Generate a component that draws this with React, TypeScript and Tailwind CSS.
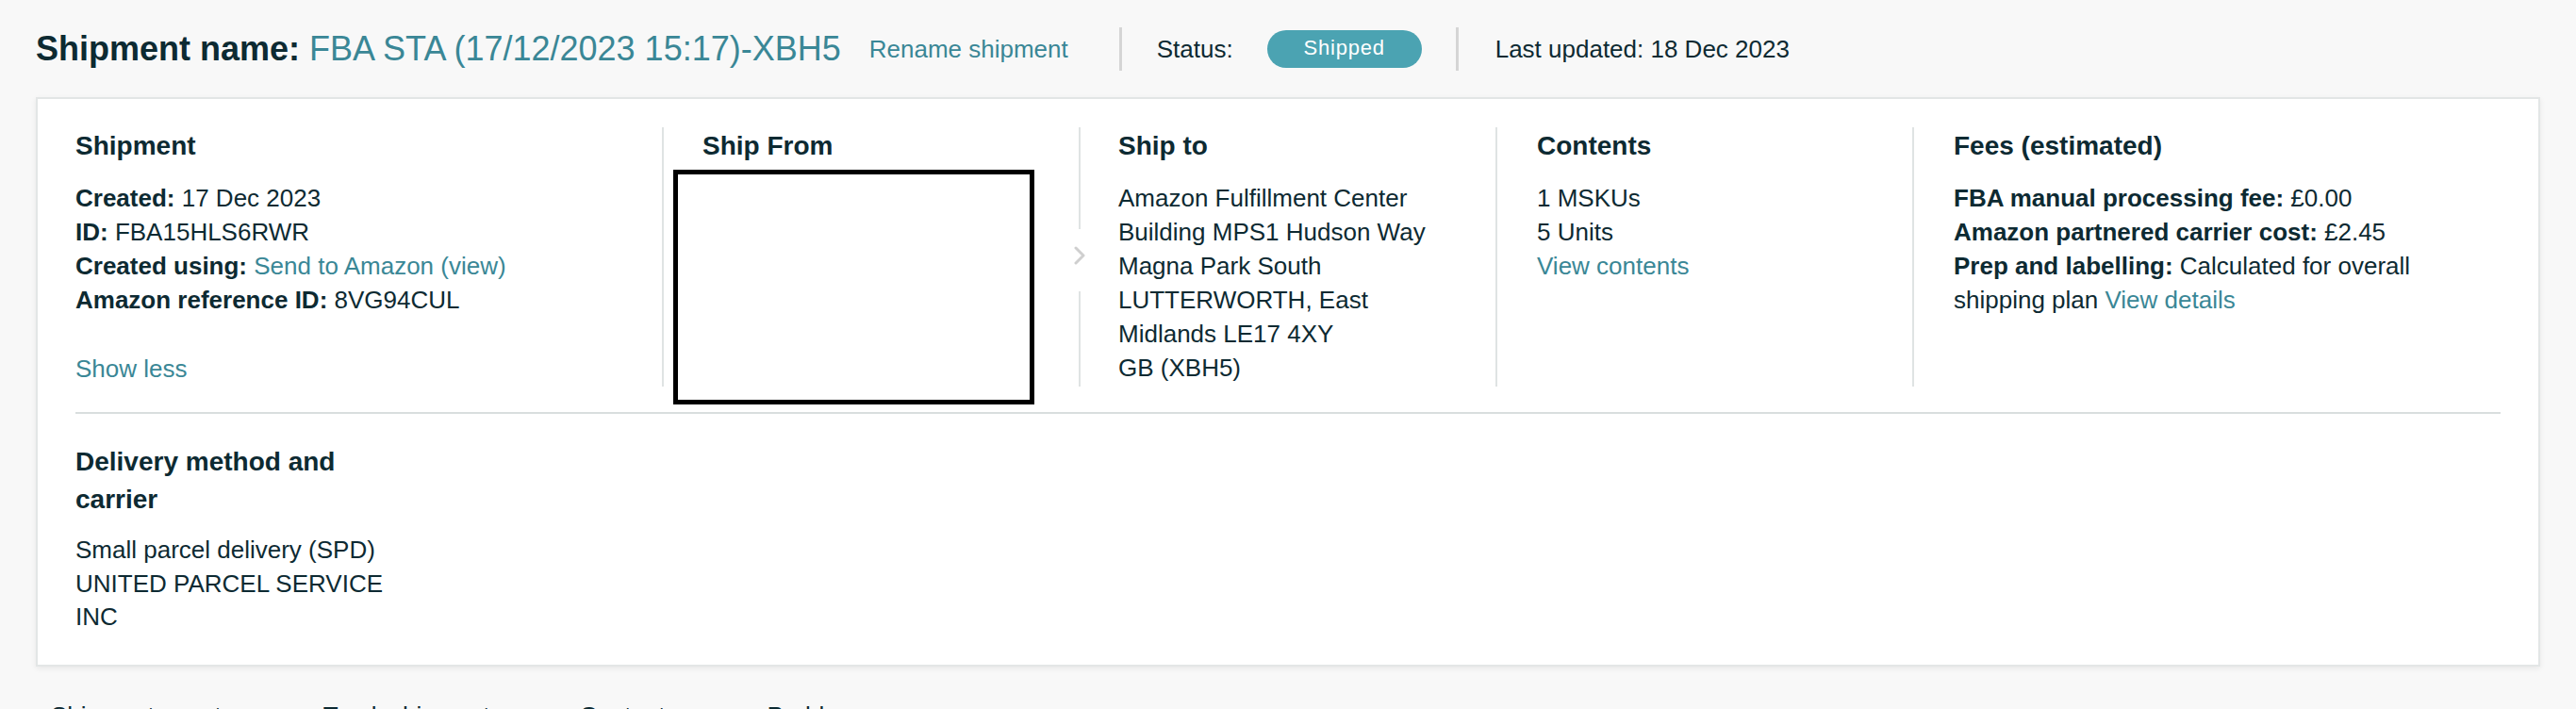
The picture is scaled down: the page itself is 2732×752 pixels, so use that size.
import React from "react";

const LINK = "text-[#3a8796]";

function Divider({ chevron = false }: { chevron?: boolean }) {
  if (!chevron) {
    return <div className="h-[275px] w-[2px] shrink-0 bg-[#dfe3e3]" />;
  }
  return (
    <div className="flex h-[275px] w-[2px] shrink-0 flex-col items-center">
      <div className="h-[108px] w-[2px] bg-[#dfe3e3]" />
      <div className="flex h-[66px] w-[2px] flex-col items-center pt-[18px]">
        <svg width="14" height="20" viewBox="0 0 14 20" className="shrink-0">
          <path d="M3 2 L11 10 L3 18" fill="none" stroke="#cfcfcf" strokeWidth="3" strokeLinecap="round" strokeLinejoin="round" />
        </svg>
      </div>
      <div className="w-[2px] flex-1 bg-[#dfe3e3]" />
    </div>
  );
}

function Heading({ children, className = "" }: { children: React.ReactNode; className?: string }) {
  return <h2 className={`text-[28px] font-bold leading-[40px] ${className}`}>{children}</h2>;
}

export default function App() {
  return (
    <div
      className="min-h-screen bg-[#f8f8f8] px-[38px] pt-[32px] text-[#0d2a32]"
      style={{ fontFamily: '"Liberation Sans", Arial, Helvetica, sans-serif' }}
    >
      {/* Header */}
      <div className="flex h-[40px] items-center whitespace-nowrap">
        <h1 className="text-[36px] leading-[40px]">
          <span className="font-bold">Shipment name:</span>{" "}
          <span className={LINK}>FBA STA (17/12/2023 15:17)-XBH5</span>
        </h1>
        <a className={`ml-[30px] text-[26px] leading-[36px] ${LINK}`}>Rename shipment</a>
        <div className="ml-[54px] h-[46px] w-[3px] bg-[#d5d5d5]" />
        <span className="ml-[37px] text-[26px] leading-[36px]">Status:</span>
        <span className="ml-[36px] flex h-[40px] w-[164px] items-center justify-center rounded-full bg-[#4ba3b2] pb-[3px] text-[22px] tracking-[0.8px] text-white">
          Shipped
        </span>
        <div className="ml-[36px] h-[46px] w-[3px] bg-[#d5d5d5]" />
        <span className="ml-[39px] text-[26px] leading-[36px]">Last updated: 18 Dec 2023</span>
      </div>

      {/* Card */}
      <div className="mt-[31px] border-2 border-[#e3e6e6] bg-white px-[40px] pb-[32px] pt-[30px] shadow-[0_2px_6px_rgba(0,0,0,0.07)]">
        <div className="flex items-start">
          {/* Shipment */}
          <div className="w-[622px] shrink-0">
            <Heading>Shipment</Heading>
            <div className="mt-[17px] text-[26px] leading-[36px]">
              <div>
                <span className="font-bold">Created:</span> 17 Dec 2023
              </div>
              <div>
                <span className="font-bold">ID:</span> FBA15HLS6RWR
              </div>
              <div>
                <span className="font-bold">Created using:</span> <a className={LINK}>Send to Amazon (view)</a>
              </div>
              <div>
                <span className="font-bold">Amazon reference ID:</span> 8VG94CUL
              </div>
              <a className={`mt-[37px] block ${LINK}`}>Show less</a>
            </div>
          </div>

          <Divider />

          {/* Ship From */}
          <div className="w-[440px] shrink-0">
            <Heading className="pl-[41px]">Ship From</Heading>
            <div className="ml-[10px] mt-[5px] h-[249px] w-[383px] border-[5px] border-black bg-white" />
          </div>

          <Divider chevron />

          {/* Ship to */}
          <div className="w-[440px] shrink-0 pl-[40px]">
            <Heading>Ship to</Heading>
            <div className="mt-[17px] text-[26px] leading-[36px]">
              <div>Amazon Fulfillment Center</div>
              <div>Building MPS1 Hudson Way</div>
              <div>Magna Park South</div>
              <div>LUTTERWORTH, East</div>
              <div>Midlands LE17 4XY</div>
              <div>GB (XBH5)</div>
            </div>
          </div>

          <Divider />

          {/* Contents */}
          <div className="w-[440px] shrink-0 pl-[42px]">
            <Heading>Contents</Heading>
            <div className="mt-[17px] text-[26px] leading-[36px]">
              <div>1 MSKUs</div>
              <div>5 Units</div>
              <a className={`block ${LINK}`}>View contents</a>
            </div>
          </div>

          <Divider />

          {/* Fees */}
          <div className="min-w-0 flex-1 pl-[42px]">
            <Heading>Fees (estimated)</Heading>
            <div className="mt-[17px] text-[26px] leading-[36px]">
              <div>
                <span className="font-bold">FBA manual processing fee:</span> £0.00
              </div>
              <div>
                <span className="font-bold">Amazon partnered carrier cost:</span> £2.45
              </div>
              <div>
                <span className="font-bold">Prep and labelling:</span> Calculated for overall shipping plan{" "}
                <a className={LINK}>View details</a>
              </div>
            </div>
          </div>
        </div>

        <div className="mt-[8px] h-[2px] bg-[#d9dede]" />

        {/* Delivery method */}
        <div className="mt-[31px] w-[355px]">
          <Heading>Delivery method and carrier</Heading>
          <div className="mt-[16px] text-[26px] leading-[35.5px]">
            <div>Small parcel delivery (SPD)</div>
            <div>UNITED PARCEL SERVICE INC</div>
          </div>
        </div>
      </div>

      {/* Tabs */}
      <div className="mt-[34px] flex gap-[95px] pl-[16px] text-[26px] leading-[36px]">
        <span>Shipment events</span>
        <span>Track shipment</span>
        <span>Contents</span>
        <span>Problems</span>
      </div>
    </div>
  );
}
